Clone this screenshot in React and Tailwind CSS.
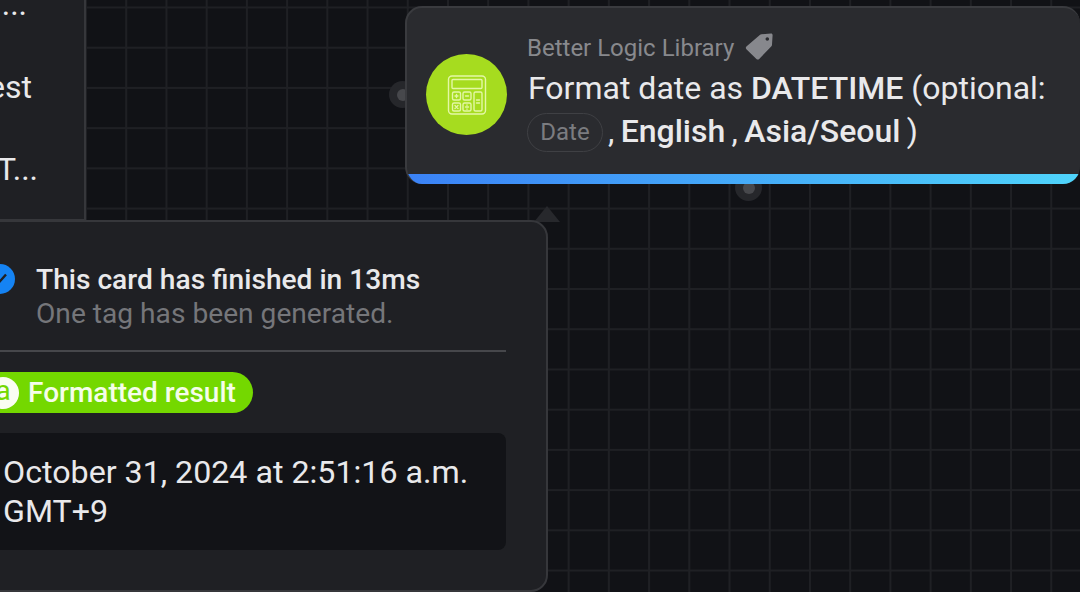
import React from "react";

function Calculator() {
  return (
    <svg width="40" height="40" viewBox="0 0 40 40" fill="none" stroke="#e4f7a6" strokeWidth="1.4" strokeLinejoin="round" strokeLinecap="round">
      <rect x="1.5" y="1" width="37" height="38" rx="3.5" />
      <rect x="5" y="4.5" width="30" height="9" rx="1" />
      <rect x="5.5" y="17" width="8" height="8" rx="1.5" />
      <rect x="16" y="17" width="8" height="8" rx="1.5" />
      <rect x="5.5" y="28" width="8" height="8" rx="1.5" />
      <rect x="16" y="28" width="8" height="8" rx="1.5" />
      <rect x="27" y="17" width="8" height="19" rx="1.5" />
      <path d="M8 21h3M9.5 19.5v3M18.5 21h3M8 30.5l3 3M11 30.5l-3 3M18.5 32h3M20 30v.2M20 34v.2M29.5 25h3M29.5 28h3" />
    </svg>
  );
}

function Tag() {
  return (
    <svg width="30" height="30" viewBox="0 0 30 30">
      <path fill="#87888d" fillRule="evenodd" d="M17.5 2.2 27 1.6c1 0 1.6.6 1.6 1.6l-.6 9.6c0 .7-.3 1.2-.8 1.7L15.2 27c-.8.8-2 .8-2.8 0l-10-9.8c-.8-.8-.8-2 0-2.8L15.8 3c.5-.5 1-.8 1.7-.8Zm5.8 3a1.8 1.8 0 1 0 0 3.6 1.8 1.8 0 0 0 0-3.6Z" />
    </svg>
  );
}

export default function App() {
  return (
    <div className="relative h-[592px] w-[1080px] overflow-hidden bg-[#111216] bg-[linear-gradient(to_right,#1f2024_2px,transparent_2px),linear-gradient(to_bottom,#1f2024_2px,transparent_2px)] bg-[size:40.23px_40.23px] bg-[position:4.6px_6.5px] font-['Roboto',sans-serif]">
      {/* left clipped node */}
      <div className="absolute left-[-20px] top-[-20px] h-[241px] w-[106px] border-r-2 border-b-2 border-[#36373b] bg-[#1f2024]">
        <div className="flex flex-col items-end text-[32px] leading-[32px] text-[#e9e9eb]">
          <span className="mr-[57px] mt-[8px]">...</span>
          <span className="mr-[52px] mt-[51px]">est</span>
          <span className="mr-[46px] mt-[50px]">T...</span>
        </div>
      </div>

      {/* connectors */}
      <div className="absolute left-[389px] top-[81px] flex h-[27px] w-[27px] items-center justify-center rounded-full bg-[#26272b]">
        <div className="h-[12px] w-[12px] rounded-full bg-[#47484c]" />
      </div>
      <div className="absolute left-[735px] top-[174px] flex h-[27px] w-[27px] items-center justify-center rounded-full bg-[#26272b]">
        <div className="mt-[1px] h-[12px] w-[12px] rounded-full bg-[#47484c]" />
      </div>

      {/* caret */}
      <div className="absolute left-[534px] top-[206px] h-0 w-0 border-x-[13px] border-b-[16px] border-x-transparent border-b-[#27282c]" />

      {/* logic card */}
      <div className="absolute left-[405px] top-[6px] flex h-[178px] w-[675px] flex-col overflow-hidden rounded-[17px] border-t-2 border-l-2 border-[#3a3b3f] bg-[#2a2b2f]">
        <div className="flex flex-1 items-start pl-[19px]">
          <div className="mt-[46px] flex h-[81px] w-[81px] shrink-0 items-center justify-center rounded-full bg-[#a6dc1f]">
            <Calculator />
          </div>
          <div className="ml-[20px] mt-[24px] flex flex-col">
            <div className="flex h-[32px] items-center text-[24px] text-[#88898d]">
              <span>Better Logic Library</span>
              <span className="ml-[10px] mt-[-2px]"><Tag /></span>
            </div>
            <div className="mt-[3px] text-[32px] leading-[43px] text-[#e9e9eb]">
              <div className="whitespace-nowrap pl-px">Format date as <span className="font-medium">DATETIME</span> (optional:</div>
              <div className="flex items-center whitespace-nowrap">
                <span className="mt-[2px] flex h-[39px] w-[76px] items-center justify-center rounded-full border border-[#3f4044] text-[24px] text-[#7b7c80]">Date</span>
                <span className="ml-[5px] [word-spacing:-1.6px]">, <span className="font-medium">English</span> , <span className="font-medium">Asia/Seoul</span> )</span>
              </div>
            </div>
          </div>
        </div>
        <div className="h-[10px] bg-[linear-gradient(to_right,#3b82f6,#4fd4fb_100%)]" />
      </div>

      {/* result popover */}
      <div className="absolute left-[-40px] top-[220px] h-[372px] w-[588px] rounded-br-[17px] rounded-tr-[17px] border-2 border-[#36373b] bg-[#1f2024] pl-[38px]">
        <div className="flex items-start pt-[40px]">
          <div className="ml-[-15px] mt-[2px] flex h-[30px] w-[30px] shrink-0 items-center justify-center rounded-full bg-[#1583f3]">
            <svg width="20" height="20" viewBox="0 0 20 20" fill="none" stroke="#1f2024" strokeWidth="2.4"><path d="m4 10.5 4 4 8-9" /></svg>
          </div>
          <div className="ml-[21px]">
            <div className="text-[28.15px] font-medium leading-[35px] text-[#e9e9eb]">This card has finished in 13ms</div>
            <div className="text-[28.15px] leading-[34px] text-[#75767a]">One tag has been generated.</div>
          </div>
        </div>
        <div className="mr-[40px] mt-[19px] h-[2px] bg-[#46474b]" />
        <div className="ml-[-20px] mt-[20px] flex h-[41px] w-[273px] items-center rounded-full bg-[#74d800]">
          <span className="flex h-[32px] w-[32px] shrink-0 translate-x-[7px] items-center justify-center rounded-full bg-[#fafdf2] pb-[3px] text-[28px] leading-none text-[#74d800]">a</span>
          <span className="ml-[16px] whitespace-nowrap text-[28px] font-medium text-[#f5fdea]">Formatted result</span>
        </div>
        <div className="ml-[-10px] mt-[20px] h-[117px] w-[516px] rounded-[8px] bg-[#121317] pl-[13px] pt-[20px] text-[32.2px] leading-[39px] text-[#e9e9eb]">
          October 31, 2024 at 2:51:16 a.m.<br />GMT+9
        </div>
      </div>
    </div>
  );
}
